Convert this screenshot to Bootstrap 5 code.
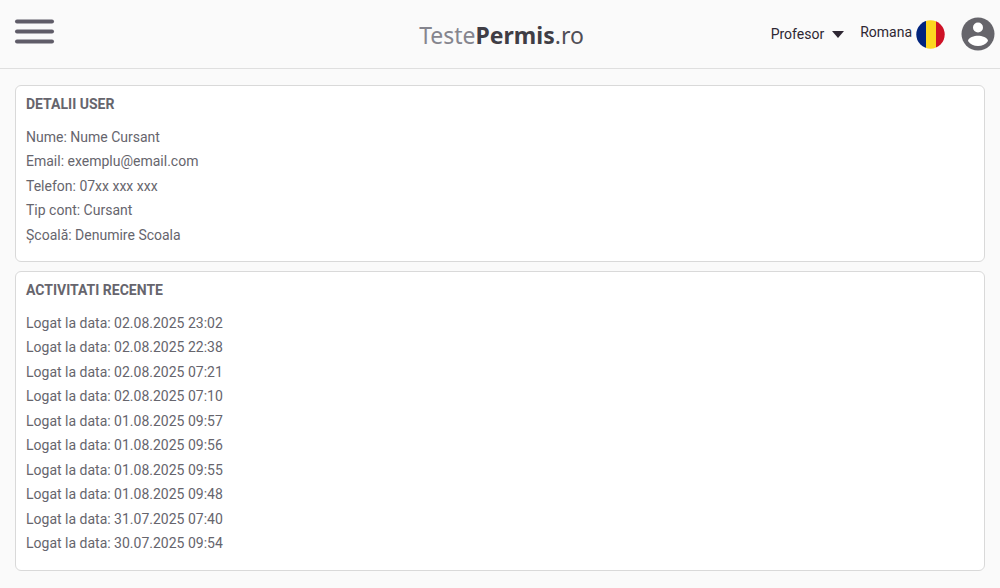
<!DOCTYPE html>
<html lang="ro">
<head>
<meta charset="utf-8">
<meta name="viewport" content="width=device-width, initial-scale=1">
<title>TestePermis.ro</title>
<link rel="stylesheet" href="https://cdn.jsdelivr.net/npm/bootstrap@5.3.0/dist/css/bootstrap.min.css">
<style>
body { background: #fafafa; color: #66656d; font-family: Roboto, "Liberation Sans", sans-serif; font-size: 14px; line-height: 1.75; }
.site-header { display: grid; grid-template-columns: 1fr auto 1fr; height: 69px; padding: 0 5px 0 8px; border-bottom: 1px solid #dfdfdf; }
.site-logo { font-family: "Noto Sans", sans-serif; font-size: 23px; font-weight: 400; line-height: 32px; padding-top: 2px; color: #85858e; }
.site-logo b { font-weight: 700; color: #3f3d45; }
.site-logo span { font-weight: 400; color: #504e56; }
.plain-btn { background: none; border: 0; padding: 0; color: #2e2733; display: flex; align-items: center; }
.menu-btn { margin: 0 0 6px 6px; }
.panel { border: 1px solid #d9d9d9; border-radius: 6px; padding: 6px 10px 14px; }
.panel h2 { font-size: 14px; font-weight: 700; line-height: 1.75; margin-bottom: 8px; }
.page-main { padding: 16px 15px; gap: 9px; }
</style>
</head>
<body>
<header class="site-header align-items-center">
  <div class="d-flex">
    <button class="plain-btn menu-btn" type="button" aria-label="Meniu">
      <svg width="41" height="26" viewBox="0 0 41 26" fill="#5f5c68"><rect x="1" y="1.500" width="39" height="4" rx="2"/><rect x="1" y="11.500" width="39" height="4" rx="2"/><rect x="1" y="21.500" width="39" height="4" rx="2"/></svg>
    </button>
  </div>
  <a class="site-logo text-decoration-none" href="#">Teste<b>Permis</b><span>.ro</span></a>
  <div class="d-flex align-items-center justify-content-end">
    <button class="plain-btn me-3" type="button">Profesor
      <svg class="ms-2" width="12" height="7" viewBox="0 0 12 7"><path d="M0 0h12L6 7z" fill="#2e2733"/></svg>
    </button>
    <button class="plain-btn me-3" type="button"><span class="pb-1">Romana</span>
      <svg class="ms-1" width="29" height="29" viewBox="0 0 29 29"><clipPath id="flag"><circle cx="14.500" cy="14.500" r="14.200"/></clipPath><g clip-path="url(#flag)"><path fill="#00247d" d="M0 0h10v29H0z"/><path fill="#fcd720" d="M10 0h10v29H10z"/><path fill="#ce1126" d="M20 0h9v29h-9z"/></g></svg>
    </button>
    <button class="plain-btn" type="button" aria-label="Cont">
      <svg width="34" height="34" viewBox="0 0 34 34"><circle cx="17" cy="17" r="16.500" fill="#66656b"/><circle cx="17" cy="10.500" r="5" fill="#fff"/><path fill="#fff" d="M7 24c0-3.500 6.500-5.200 10-5.200S27 20.500 27 24c-2.200 3.200-5.800 5-10 5S9.200 27.200 7 24z"/></svg>
    </button>
  </div>
</header>
<main class="page-main d-flex flex-column">
  <section class="panel bg-white">
    <h2>DETALII USER</h2>
    <ul class="list-unstyled mb-0">
      <li>Nume: Nume Cursant</li>
      <li>Email: exemplu@email.com</li>
      <li>Telefon: 07xx xxx xxx</li>
      <li>Tip cont: Cursant</li>
      <li>Școală: Denumire Scoala</li>
    </ul>
  </section>
  <section class="panel bg-white">
    <h2>ACTIVITATI RECENTE</h2>
    <ul class="list-unstyled mb-0">
      <li>Logat la data: 02.08.2025 23:02</li>
      <li>Logat la data: 02.08.2025 22:38</li>
      <li>Logat la data: 02.08.2025 07:21</li>
      <li>Logat la data: 02.08.2025 07:10</li>
      <li>Logat la data: 01.08.2025 09:57</li>
      <li>Logat la data: 01.08.2025 09:56</li>
      <li>Logat la data: 01.08.2025 09:55</li>
      <li>Logat la data: 01.08.2025 09:48</li>
      <li>Logat la data: 31.07.2025 07:40</li>
      <li>Logat la data: 30.07.2025 09:54</li>
    </ul>
  </section>
</main>
<script src="https://cdn.jsdelivr.net/npm/bootstrap@5.3.0/dist/js/bootstrap.bundle.min.js"></script>
</body>
</html>
